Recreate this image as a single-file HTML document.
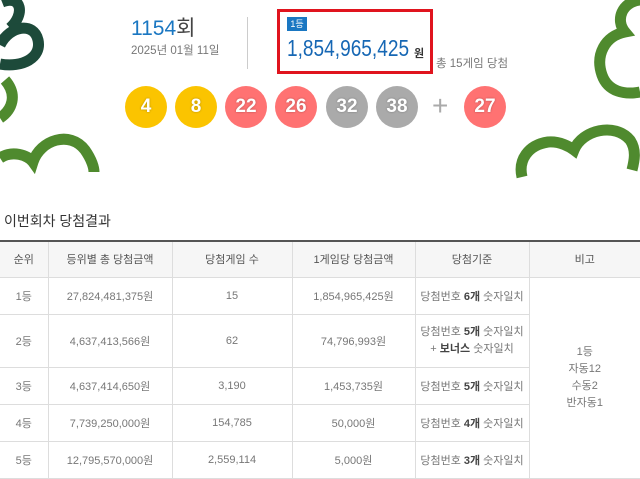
<!DOCTYPE html>
<html><head><meta charset="utf-8"><style>
*{margin:0;padding:0;box-sizing:border-box}
body{width:640px;height:478px;background:#fff;position:relative;overflow:hidden;font-family:"Liberation Sans","Noto Sans CJK KR",sans-serif;color:#666}
.abs{position:absolute}
.ball{position:absolute;top:86px;width:42px;height:42px;border-radius:50%;color:#fff;font-size:19px;font-weight:bold;text-align:center;line-height:42px;text-shadow:0 0 2px rgba(0,0,0,.3)}
.y{background:#fbc400}.r{background:#ff7272}.g{background:#aaa}
table{position:absolute;left:0;top:240px;width:640px;border-collapse:collapse;font-size:11px;color:#777;border-top:2px solid #555}
td,th{border:1px solid #ddd;text-align:center;font-weight:normal;padding:0}
th{background:#f6f6f6;height:36px;color:#555}
td{height:37px}
tr td:first-child,tr th:first-child{border-left:none}
b{color:#444}
</style></head><body>
<svg class="abs" style="left:0;top:0" width="640" height="200">
<g fill="none" stroke="#1d4a3a" stroke-width="11">
<path d="M2,2 C22,-6 25,15 10,28"/>
<path d="M0,64 C22,68 42,58 38,40 C34,22 10,25 0,45"/>
</g>
<g fill="none" stroke="#4f8a2e" stroke-width="11">
<path d="M5,80 C18,95 12,110 0,118"/>
<path d="M0,158 C12,150 28,155 33,162 C40,140 70,130 85,150 C92,160 94,168 94,172"/>
<path d="M640,0 C622,2 615,20 625,32 C605,36 595,55 602,75 C608,92 625,95 640,92"/>
<path d="M522,177 C518,160 528,145 548,142 C560,141 570,147 574,150 C582,130 615,122 630,140 C637,150 634,162 632,170"/>
</g>
</svg>
<div class="abs" style="left:131px;top:12px;font-size:21px;color:#1a77c2">1154<span style="color:#444">회</span></div>
<div class="abs" style="left:131px;top:42px;font-size:11.5px;color:#777">2025년 01월 11일</div>
<div class="abs" style="left:247px;top:17px;width:1px;height:52px;background:#ccc"></div>
<div class="abs" style="left:277px;top:9px;width:156px;height:65px;border:3px solid #e0141e"></div>
<div class="abs" style="left:287px;top:17px;width:20px;height:14px;background:#1a77c2;color:#fff;font-size:9px;text-align:center;line-height:14px">1등</div>
<div class="abs" style="left:287px;top:35px;font-size:23px;color:#1667b4;transform:scaleX(0.83);transform-origin:0 0;white-space:nowrap">1,854,965,425</div>
<div class="abs" style="left:414px;top:45px;font-size:11px;color:#333;font-weight:bold">원</div>
<div class="abs" style="left:436px;top:55px;font-size:11.5px;color:#777">총 15게임 당첨</div>
<div class="ball y" style="left:125px">4</div>
<div class="ball y" style="left:175px">8</div>
<div class="ball r" style="left:225px">22</div>
<div class="ball r" style="left:275px">26</div>
<div class="ball g" style="left:326px">32</div>
<div class="ball g" style="left:376px">38</div>
<div class="abs" style="left:432px;top:90px;font-size:28px;color:#aaa">+</div>
<div class="ball r" style="left:464px">27</div>
<div class="abs" style="left:4px;top:211px;font-size:14px;color:#333">이번회차 당첨결과</div>
<table>
<tr><th style="width:48px">순위</th><th style="width:124px">등위별 총 당첨금액</th><th style="width:120px">당첨게임 수</th><th style="width:123px">1게임당 당첨금액</th><th style="width:114px">당첨기준</th><th style="border-right:none">비고</th></tr>
<tr><td>1등</td><td>27,824,481,375원</td><td>15</td><td>1,854,965,425원</td><td>당첨번호 <b>6개</b> 숫자일치</td><td rowspan="5" style="border-right:none;line-height:17px">1등<br>자동12<br>수동2<br>반자동1</td></tr>
<tr><td style="height:53px">2등</td><td>4,637,413,566원</td><td>62</td><td>74,796,993원</td><td style="line-height:17px">당첨번호 <b>5개</b> 숫자일치<br>+ <b>보너스</b> 숫자일치</td></tr>
<tr><td style="height:36px">3등</td><td>4,637,414,650원</td><td>3,190</td><td>1,453,735원</td><td>당첨번호 <b>5개</b> 숫자일치</td></tr>
<tr><td>4등</td><td>7,739,250,000원</td><td>154,785</td><td>50,000원</td><td>당첨번호 <b>4개</b> 숫자일치</td></tr>
<tr><td style="height:36px">5등</td><td>12,795,570,000원</td><td>2,559,114</td><td>5,000원</td><td>당첨번호 <b>3개</b> 숫자일치</td></tr>
</table>
</body></html>
